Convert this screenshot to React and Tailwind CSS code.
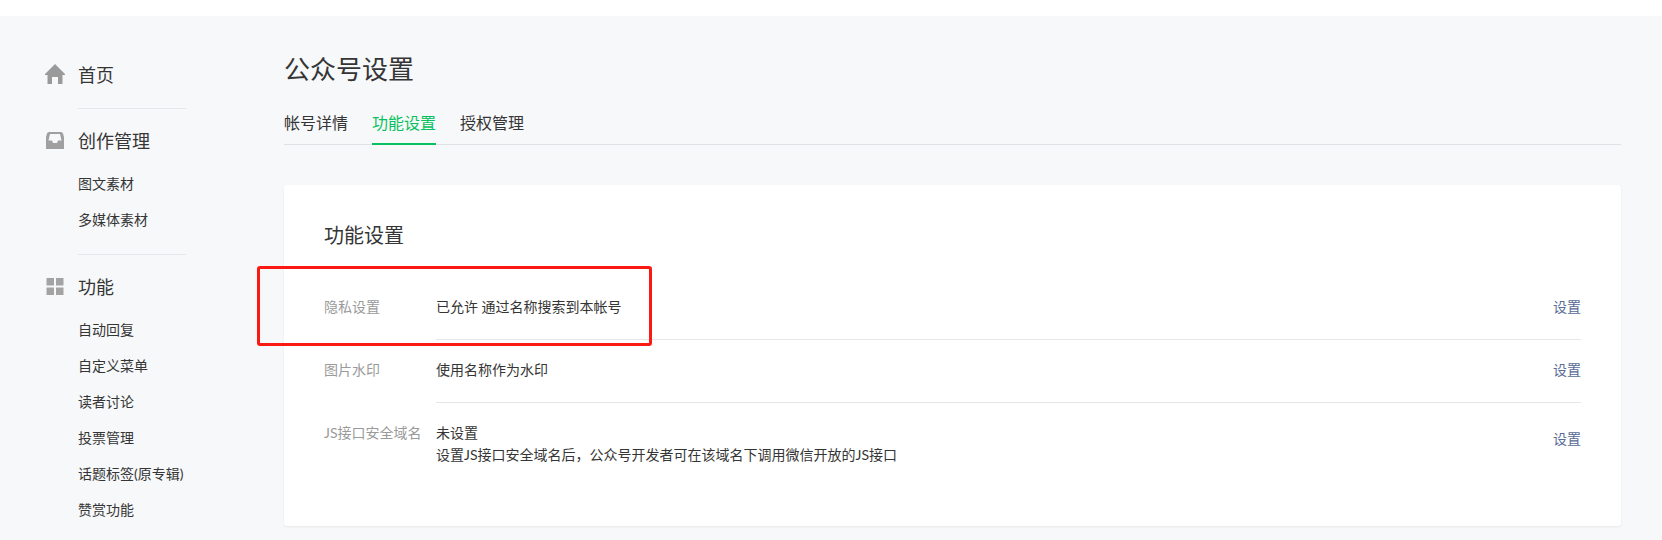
import React from 'react';

const HomeIcon = () => (
  <svg width="20" height="20" viewBox="0 0 20 20" fill="#9a9a9a">
    <path d="M10 0 L20 10 L20 11 L17.5 11 L17.5 20 L13 20 L13 13 L7 13 L7 20 L2.5 20 L2.5 11 L0 11 L0 10 Z" />
  </svg>
);

const InboxIcon = () => (
  <svg width="18" height="17" viewBox="0 0 18 17" fill="#a0a0a0">
    <path fillRule="evenodd" d="M3 0 H15 Q16.5 0 17 1.5 L18 5 V17 H0 V5 L1 1.5 Q1.5 0 3 0 Z M4 2 L2.5 8.5 H6 L7 11 H11 L12 8.5 H15.5 L14 2 Z" />
  </svg>
);

const GridIcon = () => (
  <svg width="18" height="17" viewBox="0 0 18 17" fill="#a3a3a3">
    <rect x="0.5" y="0" width="7.5" height="7.5" />
    <rect x="10" y="0" width="7.5" height="7.5" />
    <rect x="0.5" y="9.5" width="7.5" height="7.5" />
    <rect x="10" y="9.5" width="7.5" height="7.5" />
  </svg>
);

const NavHead = ({ icon, children }) => (
  <div className="flex items-center h-[36px] relative">
    <span className="absolute left-[-33px] top-0 h-[36px] w-[20px] flex items-center justify-center">{icon}</span>
    <span className="text-[18px] leading-[36px] pt-[2px] text-[#353535]">{children}</span>
  </div>
);

const NavItem = ({ children }) => (
  <div className="h-[36px] leading-[36px] text-[14px] text-[#353535] whitespace-nowrap">{children}</div>
);

const Row = ({ label, last, children }) => (
  <div className="flex">
    <div className="w-[112px] shrink-0 text-[14px] text-[#9a9a9a] leading-[22px] pt-[19px] whitespace-nowrap">{label}</div>
    <div className={'flex-1 flex justify-between pt-[19px] pb-[21px] ' + (last ? '' : 'border-b border-[#e7e7eb]')}>
      <div className="text-[14px] text-[#353535] leading-[22px]">{children}</div>
      <a className={'text-[14px] text-[#576b95] leading-[22px] ' + (last ? 'mt-[6px]' : '')}>设置</a>
    </div>
  </div>
);

export default function App() {
  return (
    <div className="h-[540px] overflow-hidden bg-white font-['Lato','Noto_Sans_CJK_SC','Liberation_Sans',sans-serif]">
      <div className="h-[16px] bg-white"></div>
      <div className="h-[524px] bg-[#f7f8fa] flex">
        <aside className="w-[284px] shrink-0 pl-[78px] pr-[98px] pt-[40px]">
          <NavHead icon={<HomeIcon />}>首页</NavHead>
          <div className="border-b border-[#e7e7eb] mt-[16px] mb-[13px]"></div>
          <NavHead icon={<InboxIcon />}>创作管理</NavHead>
          <div className="mt-[8px]">
            <NavItem>图文素材</NavItem>
            <NavItem>多媒体素材</NavItem>
          </div>
          <div className="border-b border-[#e7e7eb] mt-[16px] mb-[13px]"></div>
          <NavHead icon={<GridIcon />}>功能</NavHead>
          <div className="mt-[8px]">
            <NavItem>自动回复</NavItem>
            <NavItem>自定义菜单</NavItem>
            <NavItem>读者讨论</NavItem>
            <NavItem>投票管理</NavItem>
            <NavItem>话题标签(原专辑)</NavItem>
            <NavItem>赞赏功能</NavItem>
          </div>
        </aside>

        <main className="w-[1337px] shrink-0 pt-[34px]">
          <h1 className="text-[26px] leading-[38px] text-[#353535] font-normal">公众号设置</h1>
          <div className="mt-[16px] flex gap-[24px] border-b border-[#e0e1e5] h-[41px]">
            <span className="text-[16px] text-[#353535] leading-[38px]">帐号详情</span>
            <span className="text-[16px] text-[#07c160] leading-[38px] h-[41px] border-b-2 border-[#07c160]">功能设置</span>
            <span className="text-[16px] text-[#353535] leading-[38px]">授权管理</span>
          </div>

          <section className="relative mt-[40px] h-[341px] bg-white rounded-[3px] shadow-[0_1px_2px_rgba(150,150,150,0.15)] px-[40px] pt-[34px]">
            <h2 className="text-[20px] leading-[32px] text-[#353535] font-normal mb-[26px]">功能设置</h2>
            <Row label="隐私设置">已允许 通过名称搜索到本帐号</Row>
            <Row label="图片水印">使用名称作为水印</Row>
            <Row label="JS接口安全域名" last>
              <div>未设置</div>
              <div>设置JS接口安全域名后，公众号开发者可在该域名下调用微信开放的JS接口</div>
            </Row>
            <div className="absolute left-[-27px] top-[81px] w-[395px] h-[80px] border-[3px] border-[#fb1a13] rounded-[3px]"></div>
          </section>
        </main>
      </div>
    </div>
  );
}
